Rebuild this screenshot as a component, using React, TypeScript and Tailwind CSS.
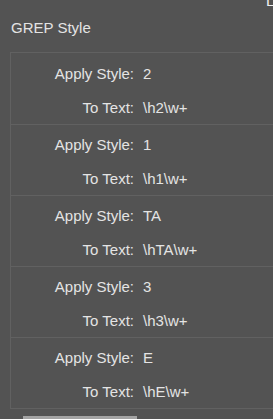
const rules = [
  { style: '2', text: '\\h2\\w+' },
  { style: '1', text: '\\h1\\w+' },
  { style: 'TA', text: '\\hTA\\w+' },
  { style: '3', text: '\\h3\\w+' },
  { style: 'E', text: '\\hE\\w+' },
];

function Row({ label, value, tall }: { label: string; value: string; tall?: boolean }) {
  return (
    <div className={`flex items-center ${tall ? 'h-[34px]' : 'h-[33px]'}`}>
      <div className="w-[123px] text-right">{label}</div>
      <div className="pl-[9px]">{value}</div>
    </div>
  );
}

export default function App() {
  return (
    <div
      className="w-[273px] h-[419px] bg-[#535353] text-[#e4e4e4] text-[15px] leading-[18px] overflow-hidden relative"
      style={{ fontFamily: '"Liberation Sans", Arial, sans-serif' }}
    >
      {/* clipped tab label at the top right */}
      <div className="absolute top-[-8px] left-[266px] text-[#f0f0f0]">L</div>

      <div className="pt-[19px] pl-[11px] h-[52px]">GREP Style</div>

      <div className="ml-[10px] w-[290px] border border-[#616161]">
        {rules.map((r, i) => (
          <div
            key={i}
            className={`${i === 0 ? 'pt-[4px]' : 'pt-[3px]'} ${i < rules.length - 1 ? 'border-b border-[#616161]' : ''}`}
          >
            <Row label="Apply Style:" value={r.style} tall />
            <Row label="To Text:" value={r.text} />
          </div>
        ))}
      </div>

      <div className="ml-[23px] mt-[7px] w-[114px] h-[4px] bg-[#a3a3a3]" />
    </div>
  );
}
